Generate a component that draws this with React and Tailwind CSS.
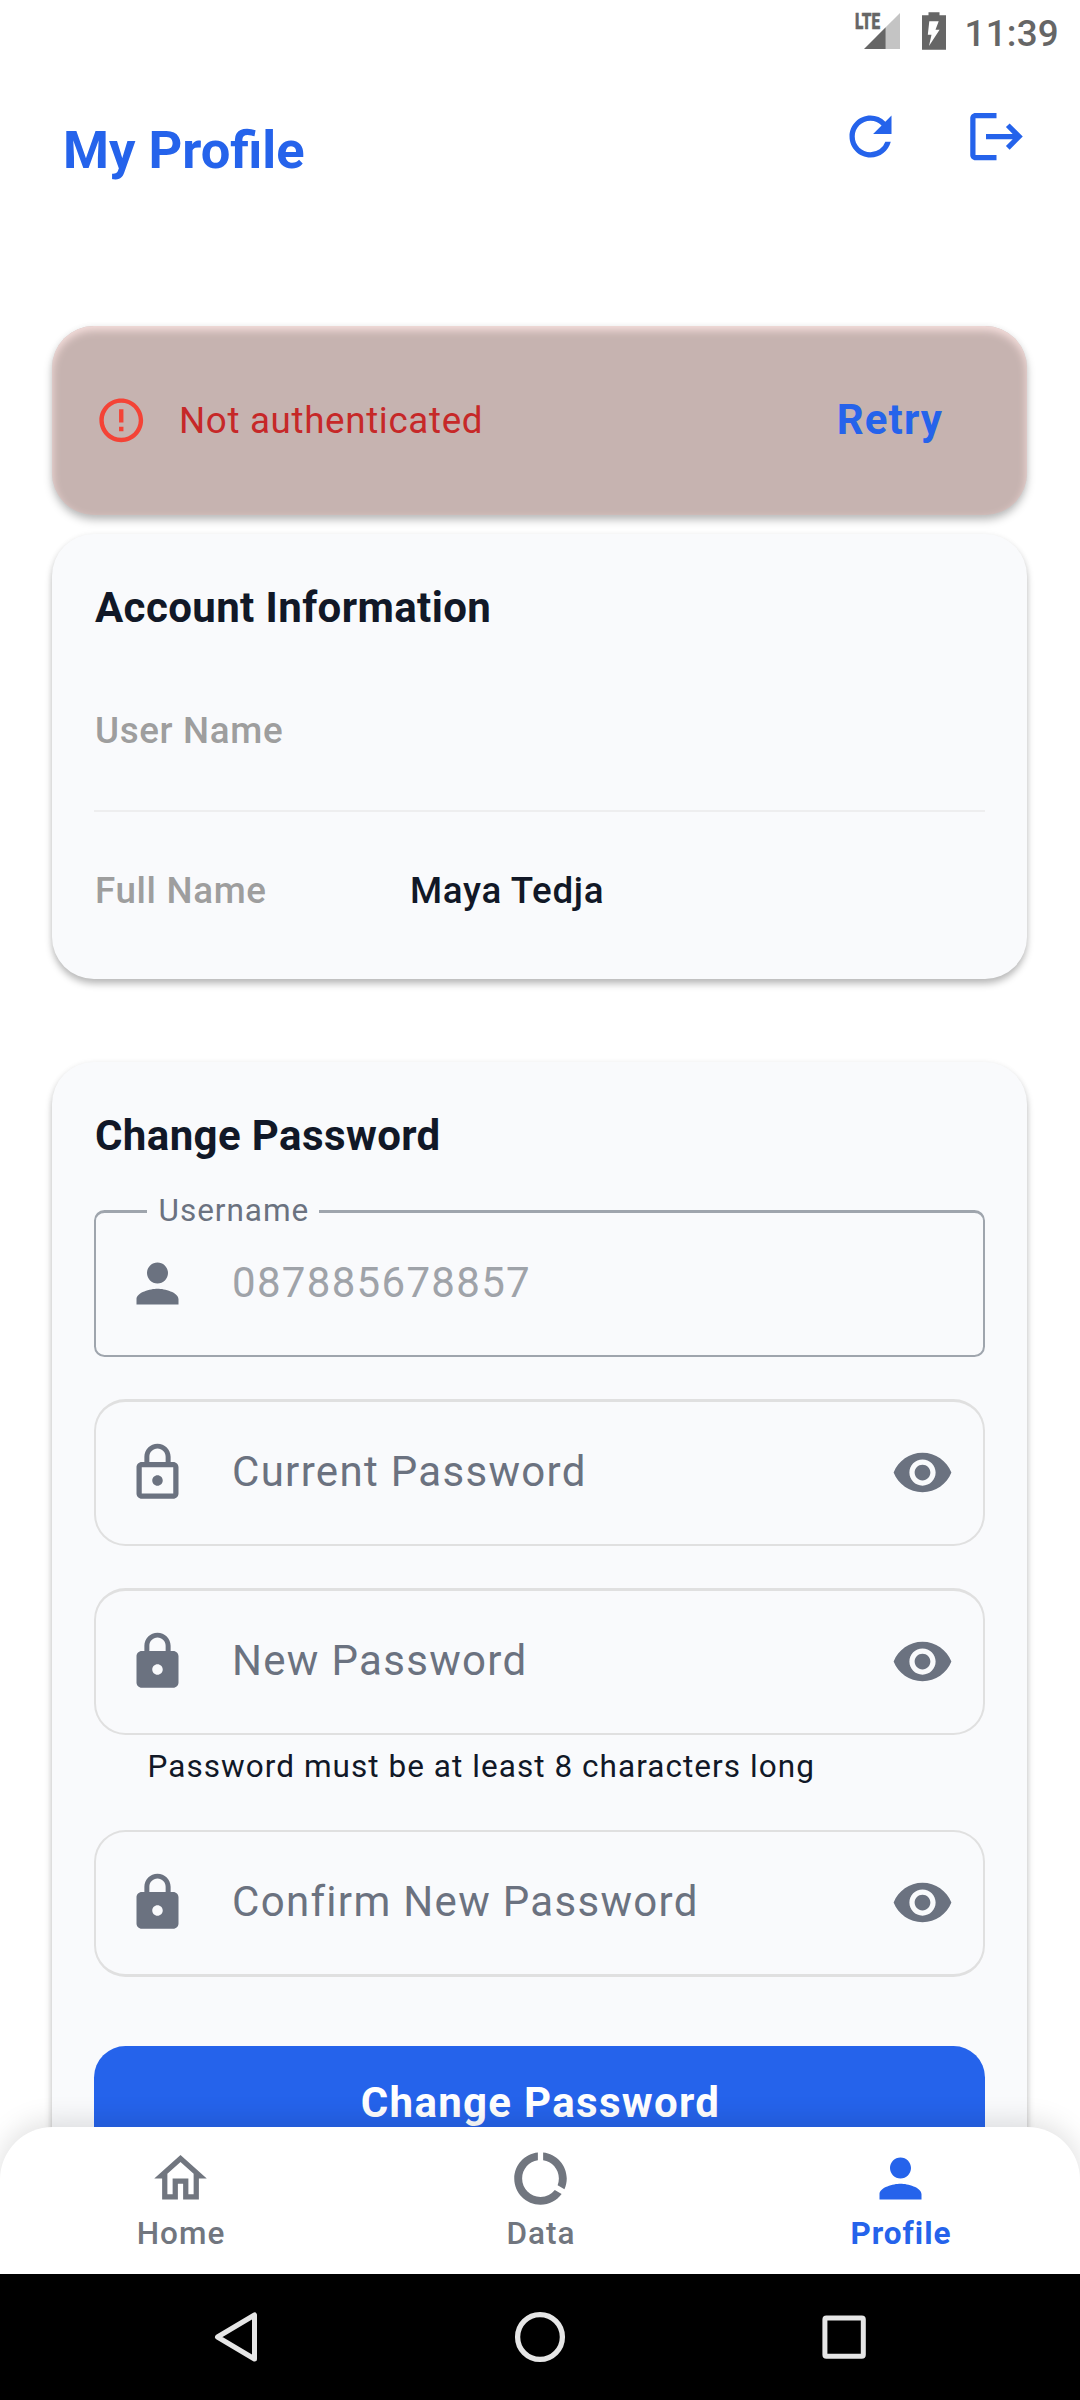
import React from 'react';
import {
  MdRefresh,
  MdLogout,
  MdErrorOutline,
  MdPerson,
  MdLockOutline,
  MdLock,
  MdVisibility,
  MdOutlineHome,
  MdDataUsage,
} from 'react-icons/md';

function StatusBar() {
  return (
    <div className="flex h-[63px] shrink-0 items-start pl-[855px] text-[#666666]">
      <svg className="h-[63px] w-[45px] shrink-0" viewBox="0 0 45 63">
        <path d="M45 13 L30.7 27.3 V49 H45 Z" fill="#c4c4c4" />
        <path d="M30.7 27.3 L9 49 H30.7 Z" fill="#666666" />
        <text
          x="0"
          y="29.3"
          fontFamily="Roboto"
          fontWeight="900"
          fontSize="22.5"
          fill="#666666"
          stroke="#666666"
          strokeWidth="0.5"
          textLength="25"
          lengthAdjust="spacingAndGlyphs"
        >
          LTE
        </text>
      </svg>
      <svg className="ml-[22px] h-[63px] w-[24px] shrink-0" viewBox="0 0 24 63">
        <path d="M6.5 12.3 H17.5 V15.3 H24 V49.7 H0 V15.3 H6.5 Z" fill="#666666" />
        <path d="M7.3 21.3 H16.7 L13.5 29.7 H17.6 L7 46 L9.5 34.7 H5.8 Z" fill="#ffffff" />
      </svg>
      <span className="ml-[18.5px] mt-[4px] text-[36.75px] leading-[60px] font-medium tracking-[0.25px]">11:39</span>
    </div>
  );
}

function Header() {
  return (
    <header className="flex h-[147px] shrink-0 justify-between pr-[52px] pl-[63px] text-[#2563eb]">
      <h1 className="mt-[57px] text-[52.5px] leading-[60px] font-bold">My Profile</h1>
      <div className="mt-[42px] flex gap-[63px]">
        <MdRefresh size={63} />
        <MdLogout size={63} />
      </div>
    </header>
  );
}

function ErrorBanner() {
  return (
    <section className="mx-[52px] mt-[116px] flex h-[189px] w-[975px] shrink-0 items-center rounded-[42px] bg-[#c6b3b0] pr-[84px] pl-[42.5px] shadow-[inset_0_4px_8px_#f8e1df,0_5px_8px_rgba(0,0,0,0.26),0_0_6px_rgba(0,0,0,0.04)]">
      <MdErrorOutline size={52.5} color="#f44336" />
      <p className="ml-[32px] grow text-[36.75px] leading-[52px] tracking-[0.656px] text-[#c62828]">
        Not authenticated
      </p>
      <button className="pb-[2px] text-[42px] leading-[60px] font-bold tracking-[1.1px] text-[#2563eb]">Retry</button>
    </section>
  );
}

function SectionTitle({ children }) {
  return (
    <h2 className="h-[60px] pl-[1px] text-[42px] leading-[60px] font-bold tracking-[0.39px] text-[#111827]">
      {children}
    </h2>
  );
}

function AccountCard() {
  return (
    <section className="mx-[52px] mt-[19px] h-[445px] w-[975px] shrink-0 rounded-[42px] bg-[#f9fafc] px-[42px] pt-[44px] text-[36.75px] font-medium tracking-[0.656px] shadow-[0_5px_7px_rgba(0,0,0,0.26),0_0_6px_rgba(0,0,0,0.04)]">
      <SectionTitle>Account Information</SectionTitle>
      <div className="mt-[12px] flex h-[160px] items-center pt-[2px] pl-[1px] text-[#9e9e9e]">
        <span className="w-[315px]">User Name</span>
      </div>
      <div className="h-[2px] bg-[#eeeeef]" />
      <div className="flex h-[156px] items-center pt-[2px] pl-[1px]">
        <span className="w-[315px] text-[#9e9e9e]">Full Name</span>
        <span className="text-[#111827]">Maya Tedja</span>
      </div>
    </section>
  );
}

function PasswordField({ icon: Icon, label, className }) {
  return (
    <div
      className={`flex h-[147px] items-center rounded-[31.5px] border-2 border-[#e0e0e0] pr-[29px] pb-[2px] pl-[30px] text-[#6b7280] ${className}`}
    >
      <Icon size={63} />
      <span className="ml-[43px] grow pb-[1px] text-[42px] leading-[60px] tracking-[1.3125px]">{label}</span>
      <MdVisibility size={63} />
    </div>
  );
}

function PasswordCard() {
  return (
    <section className="mx-[52px] mt-[83px] h-[1200px] w-[975px] shrink-0 rounded-[42px] bg-[#f9fafc] px-[42px] pt-[44px] shadow-[0_5px_7px_rgba(0,0,0,0.26),0_0_6px_rgba(0,0,0,0.04)]">
      <SectionTitle>Change Password</SectionTitle>
      <div className="relative mt-[44px] flex h-[147px] items-center rounded-[10.5px] border-2 border-t-[3px] border-[#9fa5ad] px-[30px] pb-[2px]">
        <span className="absolute -top-[20px] left-[51px] w-[172px] bg-[#f9fafc] pl-[11.5px] text-[31.5px] leading-[36px] tracking-[0.98px] text-[#6b7280]">
          Username
        </span>
        <MdPerson size={63} color="#6b7280" />
        <span className="ml-[43px] pb-[1px] text-[42px] leading-[60px] tracking-[1.3125px] text-[#9fa3a9]">
          087885678857
        </span>
      </div>
      <div className="mt-[42px]">
        <PasswordField icon={MdLockOutline} label="Current Password" className="border-t-[3px]" />
      </div>
      <div className="mt-[42px]">
        <PasswordField icon={MdLock} label="New Password" className="border-t-[3px]" />
        <p className="mt-[9px] h-[44px] pt-[1px] pl-[53.5px] text-[31.5px] leading-[44px] tracking-[1.05px] text-[#111827]">
          Password must be at least 8 characters long
        </p>
      </div>
      <div className="mt-[42px]">
        <PasswordField icon={MdLock} label="Confirm New Password" className="border-b-[3px]" />
      </div>
      <button className="mt-[69px] flex h-[126px] w-full items-start justify-center rounded-[31.5px] bg-[#2563eb] pt-[27px] pl-[2px] text-[42px] leading-[60px] font-bold tracking-[1.3125px] text-white">
        Change Password
      </button>
    </section>
  );
}

function Tab({ icon: Icon, label, active }) {
  return (
    <div
      className={
        active
          ? 'flex flex-col items-center pt-[20px] text-[#2563eb]'
          : 'flex flex-col items-center pt-[20px] text-[#71767f]'
      }
    >
      <Icon size={63} />
      <span
        className={
          active
            ? 'mt-[1px] pl-[2px] text-[31.5px] leading-[46px] font-bold tracking-[1px]'
            : 'mt-[1px] pl-[2px] text-[31.5px] leading-[46px] font-medium tracking-[1.05px]'
        }
      >
        {label}
      </span>
    </div>
  );
}

function SystemNav() {
  return (
    <div className="flex h-[126px] shrink-0 items-center justify-center bg-black">
      <div className="grid w-[912px] grid-cols-3 justify-items-center">
        <svg className="size-[60px]" viewBox="0 0 60 60" fill="none" stroke="#e6e6e6" strokeWidth="5" strokeLinejoin="round">
          <path d="M48.5 8 V52 L11.5 30 Z" />
        </svg>
        <svg className="size-[60px]" viewBox="0 0 60 60" fill="none" stroke="#e6e6e6" strokeWidth="5.3">
          <circle cx="30" cy="30" r="22.4" />
        </svg>
        <svg className="size-[60px]" viewBox="0 0 60 60" fill="none" stroke="#e6e6e6" strokeWidth="5">
          <rect x="10.9" y="10.9" width="38.4" height="38.4" rx="1.5" />
        </svg>
      </div>
    </div>
  );
}

export default function App() {
  return (
    <div className="flex h-[2400px] w-[1080px] flex-col overflow-hidden bg-white font-[Roboto,sans-serif]">
      <StatusBar />
      <Header />
      <main className="flex h-[1970px] shrink-0 flex-col overflow-hidden">
        <ErrorBanner />
        <AccountCard />
        <PasswordCard />
      </main>
      <nav className="relative -mt-[53px] grid h-[147px] shrink-0 grid-cols-3 rounded-t-[52.5px] bg-white shadow-[0_-5px_28px_rgba(0,0,0,0.13)]">
        <Tab icon={MdOutlineHome} label="Home" />
        <Tab icon={MdDataUsage} label="Data" />
        <Tab icon={MdPerson} label="Profile" active />
      </nav>
      <div className="relative">
        <SystemNav />
      </div>
    </div>
  );
}
